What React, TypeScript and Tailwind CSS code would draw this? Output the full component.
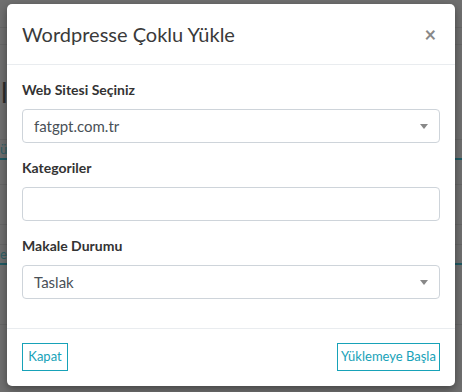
import React from 'react';

function SelectBox({ value }: { value: string }) {
  return (
    <div className="flex h-[34px] items-center justify-between rounded-[4px] border border-[#ced4da] bg-white pl-[11px] pr-[11px] text-[15px] text-[#495057]">
      <span>{value}</span>
      <span className="h-0 w-0 border-x-[4px] border-t-[5px] border-x-transparent border-t-[#888]" />
    </div>
  );
}

export default function App() {
  return (
    <div
      className="relative h-[392px] w-[462px] overflow-hidden bg-[#6f6f6f]"
      style={{ fontFamily: 'Lato, "Noto Sans", sans-serif' }}
    >
      {/* page behind the overlay */}
      <div className="flex flex-col text-[#3a3a3a]">
        <div className="h-[28px] border-b border-[#666]" />
        <div className="h-[17px] border-b border-[#676767]" />
        <div className="flex h-[95px] items-center border-b border-[#666] pl-[1px] text-[28px] text-[#2c2c2c]">l</div>
        <div className="h-[20px] border-b-2 border-[#1f5a63] text-[13px] text-[#2e5f66]">ü</div>
        <div className="h-[25px] border-b border-[#666]" />
        <div className="h-[40px] border-b border-[#666]" />
        <div className="h-[20px] border-b border-[#666]" />
        <div className="h-[20px] border-b-2 border-[#1f5a63] text-[13px] text-[#2e5f66]">e</div>
        <div className="h-[60px] border-b border-[#666]" />
      </div>

      <div className="absolute inset-0 pl-[7px] pt-[4px]">
        <div className="flex h-[382px] w-[448px] flex-col rounded-[5px] bg-white shadow-[0_3px_9px_rgba(0,0,0,0.4)]">
          <div className="flex h-[61px] shrink-0 items-center justify-between border-b border-[#e9ecef] pl-[15px] pr-[19px]">
            <h5 className="text-[20px] font-normal text-[#3a3a3a]">Wordpresse Çoklu Yükle</h5>
            <span className="text-[20px] font-bold leading-none text-[#888]">×</span>
          </div>

          <div className="flex flex-1 flex-col px-[15px] pt-[15px] text-[#333]">
            <label className="mb-[9px] text-[14px] font-bold leading-[20px]">Web Sitesi Seçiniz</label>
            <SelectBox value="fatgpt.com.tr" />

            <label className="mt-[15px] mb-[9px] text-[14px] font-bold leading-[20px]">Kategoriler</label>
            <div className="h-[34px] rounded-[4px] border border-[#ced4da] bg-white" />

            <label className="mt-[15px] mb-[9px] text-[14px] font-bold leading-[20px]">Makale Durumu</label>
            <SelectBox value="Taslak" />
          </div>

          <div className="flex shrink-0 items-center justify-between border-t border-[#e9ecef] px-[15px] pt-[14px] pb-[15px]">
            <button className="h-[28px] w-[46px] border-[1.5px] border-[#17a2b8] text-[13px] text-[#17a2b8]">Kapat</button>
            <button className="h-[28px] w-[103px] border-[1.5px] border-[#17a2b8] text-[13px] text-[#17a2b8]">Yüklemeye Başla</button>
          </div>
        </div>
      </div>
    </div>
  );
}
